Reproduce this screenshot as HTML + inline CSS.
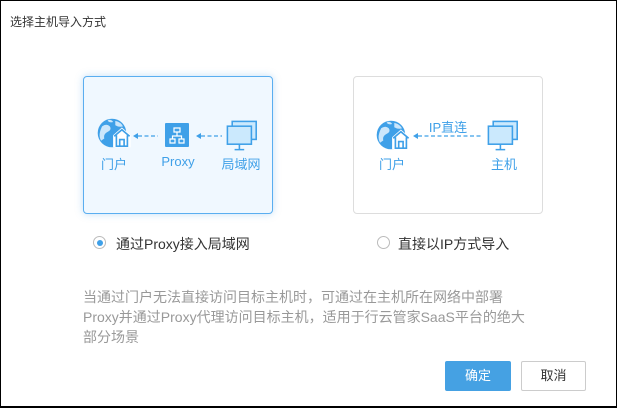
<!DOCTYPE html>
<html><head><meta charset="utf-8"><style>
*{margin:0;padding:0;box-sizing:border-box}
body{width:617px;height:408px;overflow:hidden;background:#fff;font-family:"Liberation Sans","Noto Sans CJK SC",sans-serif;position:relative;border:1px solid #000;border-bottom:2px solid #000}
.a{position:absolute}
.t{left:9px;top:12px;font-size:12px;color:#333}
.card{position:absolute;top:75px;width:190px;height:138px;border-radius:4px}
.c1{left:82px;border:1px solid #5aaef0;background:#f0f8ff;box-shadow:0 0 8px rgba(80,160,230,.35)}
.c2{left:352px;border:1px solid #ddd}
.lb{position:absolute;font-size:13px;color:#3fa0e8;transform:translateX(-50%);white-space:nowrap}
.rad{position:absolute;width:13px;height:13px;border-radius:50%;border:1px solid #bbb;background:#fff}
.rt{position:absolute;font-size:14px;color:#333}
.p{left:82px;top:286px;font-size:14px;line-height:20px;color:#999}
.btn{position:absolute;top:360px;height:30px;width:66px;border-radius:2px;font-size:13px;text-align:center;line-height:30px}
</style></head><body>
<div class="a t">选择主机导入方式</div>

<div class="card c1"></div>
<div class="card c2"></div>

<svg class="a" style="left:-1px;top:-1px" width="617" height="408">
<defs>
<g id="globe">
<circle cx="0" cy="0" r="13" fill="#3fa0e8"/>
<path d="M-9 -6 q4 -3 7 0 q2 3 -2 5 q-4 2 -3 6 l-3 2 q-3 -5 1 -13z M3 -11 q5 1 7 5 q-4 1 -7 -1z M-3 -12 q3 0 4 2 q-3 1 -5 -1z" fill="#cbe6fb"/>
<path d="M1 2 l8 -7 l8 7 v11 h-16z" fill="#fff"/>
<path d="M2 3 l7 -6 l7 6 M4 2 v10 h10 v-10 M7 12 v-6 h4 v6" fill="none" stroke="#3fa0e8" stroke-width="1.5"/>
</g>
<g id="mon">
<rect x="-9" y="-13" width="20" height="15" fill="#cbe9fd" stroke="#3fa0e8" stroke-width="1.3"/>
<rect x="-13" y="-9" width="20" height="15" fill="#cbe9fd" stroke="#3fa0e8" stroke-width="1.3"/>
<path d="M-3 6 v4 M-7 10.5 h8" stroke="#3fa0e8" stroke-width="1.3"/>
</g>
</defs>
<g transform="translate(112,133) scale(1.1)"><use href="#globe"/></g>
<g transform="translate(391,135) scale(1.1)"><use href="#globe"/></g>
<g transform="translate(243,137) scale(1.2)"><use href="#mon"/></g>
<g transform="translate(504,137) scale(1.2)"><use href="#mon"/></g>
<rect x="165" y="123" width="24" height="24" rx="1" fill="#3fa0e8"/>
<path d="M174 128h6v4h-6z M170 139h5v4h-5z M179 139h5v4h-5z M177 132v4 M172.5 139v-3h9v3" fill="none" stroke="#fff" stroke-width="1.2"/>
<g stroke="#3fa0e8" stroke-width="1.3" stroke-dasharray="4 2.5" fill="none">
<path d="M138 136H158"/><path d="M201 136H222"/><path d="M418 136H482"/>
</g>
<g fill="#3fa0e8">
<path d="M133 136l5 -3v6z"/><path d="M196 136l5 -3v6z"/><path d="M413 136l5 -3v6z"/>
</g>
</svg>

<div class="lb" style="left:113px;top:153px">门户</div>
<div class="lb" style="left:177px;top:153px">Proxy</div>
<div class="lb" style="left:240px;top:153px">局域网</div>
<div class="lb" style="left:447px;top:116px">IP直连</div>
<div class="lb" style="left:391px;top:153px">门户</div>
<div class="lb" style="left:503px;top:153px">主机</div>

<div class="rad" style="left:92px;top:235px;border-color:#bbb"></div>
<div class="a" style="left:95.5px;top:238.5px;width:6px;height:6px;border-radius:50%;background:#3fa0e8"></div>
<div class="rt" style="left:115px;top:233px">通过Proxy接入局域网</div>
<div class="rad" style="left:376px;top:235px"></div>
<div class="rt" style="left:397px;top:233px">直接以IP方式导入</div>

<div class="a p">当通过门户无法直接访问目标主机时，可通过在主机所在网络中部署<br>Proxy并通过Proxy代理访问目标主机，适用于行云管家SaaS平台的绝大<br>部分场景</div>

<div class="btn" style="left:444px;background:#45a1e3;color:#fff">确定</div>
<div class="btn" style="left:520px;width:65px;border:1px solid #ccc;color:#333;line-height:28px">取消</div>
</body></html>
